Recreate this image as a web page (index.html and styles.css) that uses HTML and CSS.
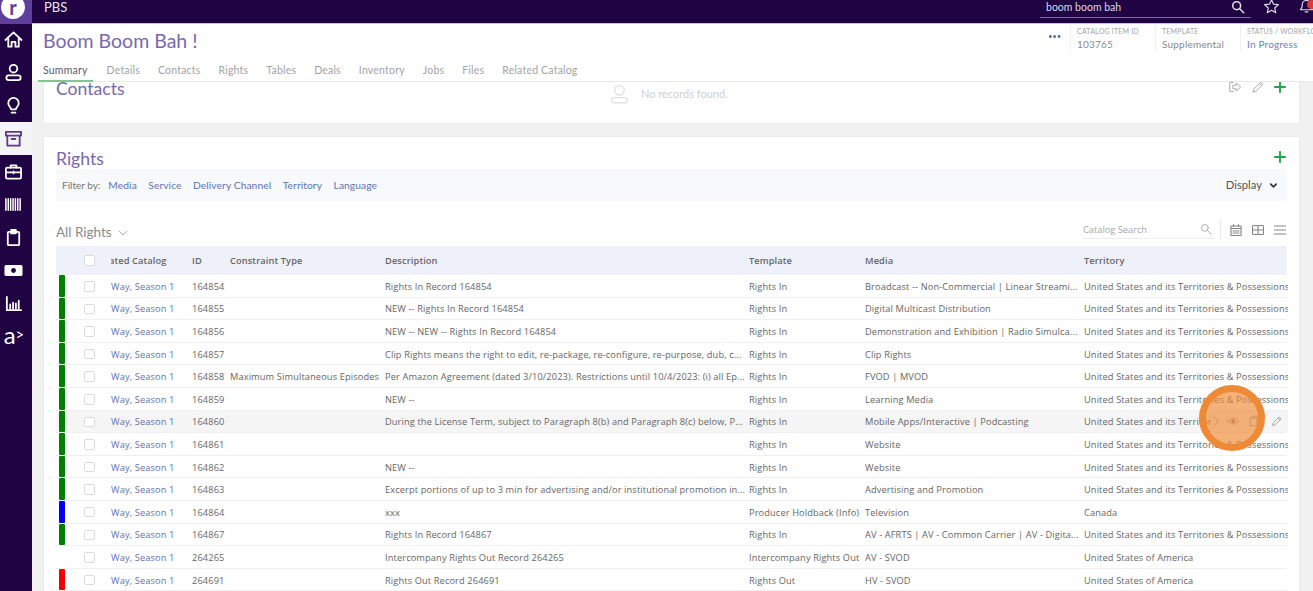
FILE: index.html
```html
<!DOCTYPE html>
<html lang="en">
<head>
<meta charset="utf-8">
<title>Boom Boom Bah !</title>
<link rel="stylesheet" href="styles.css">
</head>
<body>
<div class="app">
  <nav class="sidebar">
    <div class="logo"><span class="logo-disc">r</span></div>
    <a class="nav-item"><svg viewBox="0 0 20 20"><path d="M1.500 10.500 10 2.500l8.500 8M4.500 8.500V17.500h3.500v-5h4v5h3.500V8.500"/></svg></a>
    <a class="nav-item"><svg viewBox="0 0 20 20"><circle cx="10" cy="6" r="4"/><rect x="2.500" y="13" width="15" height="5" rx="2.500"/></svg></a>
    <a class="nav-item"><svg viewBox="0 0 20 20"><path d="M7.500 14C7 11.500 4.500 10.500 4.500 7.500a5.500 5.500 0 0 1 11 0c0 3-2.500 4-3 6.500zM8 17.500h4"/></svg></a>
    <a class="nav-item active"><svg viewBox="0 0 20 20"><rect x="2" y="3" width="16" height="4"/><path d="M3.500 7v10.500h13V7M8 10.500h4"/></svg></a>
    <a class="nav-item"><svg viewBox="0 0 20 20"><rect x="2" y="6" width="16" height="11.500" rx="1.500"/><path d="M7 6V3.500h6V6M2 11h16M10 10v2"/></svg></a>
    <a class="nav-item"><svg viewBox="0 0 20 20" class="bars"><path d="M2 4v12M4.500 4v12M7 4v12M9.500 4v12M12 4v12M14.500 4v12M17 4v12"/></svg></a>
    <a class="nav-item"><svg viewBox="0 0 20 20"><rect x="4" y="4" width="12" height="14" rx="1"/><rect x="7.500" y="2" width="5" height="3.500" fill="#fff"/></svg></a>
    <a class="nav-item"><svg viewBox="0 0 22 20"><rect x="1.500" y="4.500" width="19" height="11" rx="1" fill="#fff"/><circle cx="11" cy="10" r="2.800" fill="#1f0342" stroke="none"/></svg></a>
    <a class="nav-item"><svg viewBox="0 0 20 20"><path d="M3 3v14h15M6.500 15v-4M9.500 15V9M12.500 15v-5M15.500 15V7"/></svg></a>
    <a class="nav-item nav-text">a<span class="nav-caret">&gt;</span></a>
  </nav>
  <div class="main">
    <header class="topbar">
      <span class="org">PBS</span>
      <div class="top-tools">
        <div class="search">
          <span>boom boom bah</span>
          <svg viewBox="0 0 16 16"><circle cx="6.500" cy="6.500" r="4.500"/><path d="M10 10l4.500 4.500"/></svg>
        </div>
        <svg class="tool-star" viewBox="0 0 20 20"><path d="M10 2l2.400 5.300 5.600.6-4.200 3.800 1.200 5.700L10 14.500l-5 2.900 1.200-5.700L2 7.900l5.600-.6z"/></svg>
        <div class="bell">
          <svg viewBox="0 0 20 20"><path d="M3 15c2-2 2-3.500 2-6a5 5 0 0 1 10 0c0 2.500 0 4 2 6zM8.500 17.500h3"/></svg>
          <span class="badge"></span>
        </div>
      </div>
    </header>
    <section class="pagehead">
      <div class="title-row">
        <h1>Boom Boom Bah !</h1>
        <div class="meta">
          <span class="dots">•••</span>
          <div class="meta-col"><small>CATALOG ITEM ID</small><span>103765</span></div>
          <div class="meta-col"><small>TEMPLATE</small><span>Supplemental</span></div>
          <div class="meta-col"><small>STATUS / WORKFLOW</small><span class="link">In Progress</span></div>
        </div>
      </div>
      <div class="tabs">
        <a class="tab current">Summary</a><a class="tab">Details</a><a class="tab">Contacts</a><a class="tab">Rights</a><a class="tab">Tables</a><a class="tab">Deals</a><a class="tab">Inventory</a><a class="tab">Jobs</a><a class="tab">Files</a><a class="tab">Related Catalog</a>
      </div>
    </section>
    <div class="content">
      <section class="card contacts">
        <h2>Contacts</h2>
        <div class="empty">
          <svg viewBox="0 0 20 20"><circle cx="10" cy="6.500" r="4.500"/><rect x="2.500" y="13.500" width="15" height="5" rx="2.500"/></svg>
          <span>No records found.</span>
        </div>
        <div class="card-tools">
          <svg class="grey" viewBox="0 0 16 16"><path d="M6 3H2v10h4M6 6h3.500V3.500L14.500 8l-5 4.500V10H6z"/></svg>
          <svg class="grey" viewBox="0 0 16 16"><path d="M2.500 13.500l1-3.500 7.500-7.500 2.500 2.500L6 12.500zM9.500 4l2.500 2.500"/></svg>
          <svg class="plus" viewBox="0 0 14 14"><path d="M7 1v12M1 7h12"/></svg>
        </div>
      </section>
      <section class="card rights">
        <div class="rights-head">
          <h2>Rights</h2>
          <svg class="plus" viewBox="0 0 14 14"><path d="M7 1v12M1 7h12"/></svg>
        </div>
        <div class="filters">
          <span class="filter-label">Filter by:</span>
          <a>Media</a><a>Service</a><a>Delivery Channel</a><a>Territory</a><a>Language</a>
          <span class="display">Display<svg viewBox="0 0 10 10"><path d="M2 3.500 5 6.500l3-3"/></svg></span>
        </div>
        <div class="view-row">
          <span class="view-name">All Rights<svg viewBox="0 0 12 12"><path d="M1.500 4 6 8.500 10.500 4"/></svg></span>
          <div class="view-tools">
            <div class="cat-search"><span>Catalog Search</span><svg viewBox="0 0 16 16"><circle cx="6.500" cy="6.500" r="4.500"/><path d="M10 10l4.500 4.500"/></svg></div>
            <span class="tool-sep"></span>
            <svg viewBox="0 0 14 14"><rect x="2" y="3" width="10" height="9.500"/><path d="M2 5.500h10M4.500 1.500v2M9.500 1.500v2M4 8h6M4 10h6"/></svg>
            <svg viewBox="0 0 14 14"><rect x="1.500" y="2.500" width="11" height="9" rx="1"/><path d="M1.500 7h11M7 2.500v9"/></svg>
            <svg viewBox="0 0 14 14"><path d="M1.500 3h11M1.500 7h11M1.500 11h11"/></svg>
          </div>
        </div>
        <div class="grid">
          <div class="row head">
            <span class="c-mark"></span><span class="c-check"><i class="box"></i></span>
            <span class="c-cat clip">ated Catalog</span><span class="c-id">ID</span><span class="c-con">Constraint Type</span><span class="c-desc">Description</span><span class="c-tpl">Template</span><span class="c-med">Media</span><span class="c-ter">Territory</span>
          </div>
          <div class="row"><span class="c-mark"><i class="mark green"></i></span><span class="c-check"><i class="box"></i></span><a class="c-cat">Way, Season 1</a><span class="c-id">164854</span><span class="c-con"></span><span class="c-desc">Rights In Record 164854</span><span class="c-tpl">Rights In</span><span class="c-med">Broadcast -- Non-Commercial | Linear Streami...</span><span class="c-ter">United States and its Territories &amp; Possessions</span></div>
          <div class="row"><span class="c-mark"><i class="mark green"></i></span><span class="c-check"><i class="box"></i></span><a class="c-cat">Way, Season 1</a><span class="c-id">164855</span><span class="c-con"></span><span class="c-desc">NEW -- Rights In Record 164854</span><span class="c-tpl">Rights In</span><span class="c-med">Digital Multicast Distribution</span><span class="c-ter">United States and its Territories &amp; Possessions</span></div>
          <div class="row"><span class="c-mark"><i class="mark green"></i></span><span class="c-check"><i class="box"></i></span><a class="c-cat">Way, Season 1</a><span class="c-id">164856</span><span class="c-con"></span><span class="c-desc">NEW -- NEW -- Rights In Record 164854</span><span class="c-tpl">Rights In</span><span class="c-med">Demonstration and Exhibition | Radio Simulca...</span><span class="c-ter">United States and its Territories &amp; Possessions</span></div>
          <div class="row"><span class="c-mark"><i class="mark green"></i></span><span class="c-check"><i class="box"></i></span><a class="c-cat">Way, Season 1</a><span class="c-id">164857</span><span class="c-con"></span><span class="c-desc">Clip Rights means the right to edit, re-package, re-configure, re-purpose, dub, c...</span><span class="c-tpl">Rights In</span><span class="c-med">Clip Rights</span><span class="c-ter">United States and its Territories &amp; Possessions</span></div>
          <div class="row"><span class="c-mark"><i class="mark green"></i></span><span class="c-check"><i class="box"></i></span><a class="c-cat">Way, Season 1</a><span class="c-id">164858</span><span class="c-con">Maximum Simultaneous Episodes</span><span class="c-desc">Per Amazon Agreement (dated 3/10/2023). Restrictions until 10/4/2023: (i) all Ep...</span><span class="c-tpl">Rights In</span><span class="c-med">FVOD | MVOD</span><span class="c-ter">United States and its Territories &amp; Possessions</span></div>
          <div class="row"><span class="c-mark"><i class="mark green"></i></span><span class="c-check"><i class="box"></i></span><a class="c-cat">Way, Season 1</a><span class="c-id">164859</span><span class="c-con"></span><span class="c-desc">NEW --</span><span class="c-tpl">Rights In</span><span class="c-med">Learning Media</span><span class="c-ter">United States and its Territories &amp; Possessions</span></div>
          <div class="row hover"><span class="c-mark"><i class="mark green"></i></span><span class="c-check"><i class="box"></i></span><a class="c-cat">Way, Season 1</a><span class="c-id">164860</span><span class="c-con"></span><span class="c-desc">During the License Term, subject to Paragraph 8(b) and Paragraph 8(c) below, P...</span><span class="c-tpl">Rights In</span><span class="c-med">Mobile Apps/Interactive | Podcasting</span><span class="c-ter">United States and its Territories &amp; Possessions</span>
            <div class="row-actions">
              <svg viewBox="0 0 14 14"><path d="M5 2l5 5-5 5"/></svg>
              <svg viewBox="0 0 14 14"><path d="M1 7c3-4.500 9-4.500 12 0-3 4.500-9 4.500-12 0z"/><circle cx="7" cy="7" r="1.800" fill="#a55"/></svg>
              <svg viewBox="0 0 14 14"><rect x="3" y="3.500" width="7.500" height="9"/><path d="M5.500 3.500V1.500h6v9h-1"/></svg>
              <svg viewBox="0 0 14 14"><path d="M2 12l.8-3 6.700-6.700 2.200 2.200L5 11.200zM8.500 3.500l2.200 2.200"/></svg>
            </div>
          </div>
          <div class="row"><span class="c-mark"><i class="mark green"></i></span><span class="c-check"><i class="box"></i></span><a class="c-cat">Way, Season 1</a><span class="c-id">164861</span><span class="c-con"></span><span class="c-desc"></span><span class="c-tpl">Rights In</span><span class="c-med">Website</span><span class="c-ter">United States and its Territories &amp; Possessions</span></div>
          <div class="row"><span class="c-mark"><i class="mark green"></i></span><span class="c-check"><i class="box"></i></span><a class="c-cat">Way, Season 1</a><span class="c-id">164862</span><span class="c-con"></span><span class="c-desc">NEW --</span><span class="c-tpl">Rights In</span><span class="c-med">Website</span><span class="c-ter">United States and its Territories &amp; Possessions</span></div>
          <div class="row"><span class="c-mark"><i class="mark green"></i></span><span class="c-check"><i class="box"></i></span><a class="c-cat">Way, Season 1</a><span class="c-id">164863</span><span class="c-con"></span><span class="c-desc">Excerpt portions of up to 3 min for advertising and/or institutional promotion in...</span><span class="c-tpl">Rights In</span><span class="c-med">Advertising and Promotion</span><span class="c-ter">United States and its Territories &amp; Possessions</span></div>
          <div class="row"><span class="c-mark"><i class="mark blue"></i></span><span class="c-check"><i class="box"></i></span><a class="c-cat">Way, Season 1</a><span class="c-id">164864</span><span class="c-con"></span><span class="c-desc">xxx</span><span class="c-tpl">Producer Holdback (Info)</span><span class="c-med">Television</span><span class="c-ter">Canada</span></div>
          <div class="row"><span class="c-mark"><i class="mark green"></i></span><span class="c-check"><i class="box"></i></span><a class="c-cat">Way, Season 1</a><span class="c-id">164867</span><span class="c-con"></span><span class="c-desc">Rights In Record 164867</span><span class="c-tpl">Rights In</span><span class="c-med">AV - AFRTS | AV - Common Carrier | AV - Digita...</span><span class="c-ter">United States and its Territories &amp; Possessions</span></div>
          <div class="row"><span class="c-mark"></span><span class="c-check"><i class="box"></i></span><a class="c-cat">Way, Season 1</a><span class="c-id">264265</span><span class="c-con"></span><span class="c-desc">Intercompany Rights Out Record 264265</span><span class="c-tpl">Intercompany Rights Out</span><span class="c-med">AV - SVOD</span><span class="c-ter">United States of America</span></div>
          <div class="row"><span class="c-mark"><i class="mark red"></i></span><span class="c-check"><i class="box"></i></span><a class="c-cat">Way, Season 1</a><span class="c-id">264691</span><span class="c-con"></span><span class="c-desc">Rights Out Record 264691</span><span class="c-tpl">Rights Out</span><span class="c-med">HV - SVOD</span><span class="c-ter">United States of America</span></div>
        </div>
      </section>
    </div>
  </div>
</div>
<div class="spotlight"></div>
</body>
</html>
```
FILE: styles.css
```css
* { box-sizing: border-box; }
html, body { margin: 0; height: 591px; overflow: hidden; }
body { font-family: "Open Sans", "Liberation Sans", sans-serif; font-size: 9.5px; color: #666; background: #f1f1f1; }
h1, h2 { margin: 0; font-family: Lato, "Open Sans", sans-serif; font-weight: 400; color: #7868b0; }
svg { fill: none; stroke-linecap: round; stroke-linejoin: round; }

.app { display: flex; height: 591px; }

/* sidebar */
.sidebar { width: 32px; flex: none; background: #1f0342; display: flex; flex-direction: column; }
.logo { height: 24px; background: #5f3f9e; overflow: hidden; display: flex; justify-content: center; margin-bottom: -1px; padding-right: 6px; }
.logo-disc { width: 24px; height: 24px; flex: none; margin-top: -5px; border-radius: 50%; background: #fff; color: #5f3f9e; font: 700 20px/24px Lato, sans-serif; text-align: center; }
.nav-item { height: 33px; flex: none; display: flex; align-items: center; justify-content: center; padding-right: 6px; }
.nav-item svg { width: 19px; height: 19px; stroke: #fff; stroke-width: 1.900; }
.nav-item .bars { stroke-width: 1.600; }
.nav-item.active { background: #f4f4f4; }
.nav-item.active svg { stroke: #5b3b8c; }
.nav-text { color: #fff; font: 400 24px/1 Lato, sans-serif; padding-bottom: 4px; padding-right: 4px; }
.nav-caret { font-size: 15px; }

.main { flex: 1; min-width: 0; display: flex; flex-direction: column; }

/* top bar */
.topbar { height: 24px; flex: none; background: #1f0342; border-bottom: 1px solid #c9bfd8; display: flex; align-items: flex-start; justify-content: space-between; padding-left: 12px; overflow: hidden; }
.org { color: #e8e4f0; font: 400 13px/14px Lato, sans-serif; }
.top-tools { display: flex; align-items: flex-start; gap: 12px; margin-right: -15px; }
.search { width: 211px; height: 18px; border-bottom: 1px solid #7f6a9e; display: flex; justify-content: space-between; padding: 0 6px; color: #ddd8e6; font: 400 10.500px/14px Lato, sans-serif; }
.search svg { width: 14px; height: 14px; stroke: #ddd8e6; stroke-width: 1.800; }
.tool-star { width: 17px; height: 17px; margin-top: -2px; stroke: #ddd8e6; stroke-width: 1.400; }
.bell { position: relative; width: 30px; margin-left: 6px; height: 16px; }
.bell svg { width: 17px; height: 17px; stroke: #ddd8e6; stroke-width: 1.400; margin-top: -3px; }
.badge { position: absolute; left: 9px; top: 0; width: 9px; height: 9px; border-radius: 50%; background: #e53935; }

/* page header */
.pagehead { height: 58px; flex: none; background: #fff; border-bottom: 1px solid #e9e9e9; padding-left: 11px; position: relative; z-index: 2; }
.title-row { height: 36px; display: flex; justify-content: space-between; }
h1 { font-size: 19.500px; line-height: 33px; }
.meta { display: flex; align-items: flex-start; padding-top: 1px; }
.dots { color: #4a5fb0; font-size: 12px; line-height: 24px; letter-spacing: -.2px; margin-right: 9px; }
.meta-col { width: 85px; height: 27px; border-left: 1px solid #f0f0f0; padding-left: 6px; display: flex; flex-direction: column; font: 400 10px/14px Lato, sans-serif; letter-spacing: .2px; color: #8a8a8a; white-space: nowrap; overflow: hidden; }
.meta-col small { font-size: 7px; line-height: 11px; padding-top: 1px; color: #a5a5a5; }
.meta-col .link { color: #6d7fc0; }
.meta-col:last-child { width: 73px; }
.tabs { display: flex; margin-left: -5px; }
.tab { padding: 0 5px; margin-right: 8px; height: 22px; font: 400 10.500px/20px Lato, sans-serif; letter-spacing: .2px; color: #a3a3a3; }
.tab.current { color: #5e5a6b; border-bottom: 2px solid #7ec88f; margin-right: 9px; }

/* content */
.content { flex: 1; min-height: 0; padding: 0 13px 0 11px; overflow: hidden; }
.card { background: #fff; border: 1px solid #ececec; border-top: 0; }
h2 { font-size: 17.600px; line-height: 20px; }
.contacts { height: 42px; padding: 0 12px; display: flex; align-items: flex-start; position: relative; }
.contacts h2 { margin-top: -3px; width: 553px; flex: none; }
.empty { display: flex; align-items: center; gap: 11px; font: 400 11px/14px Lato, sans-serif; color: #cfcfcf; margin-top: 1px; }
.empty svg { width: 21px; height: 22px; stroke: #e0e0e0; stroke-width: 1.300; }
.card-tools { margin-left: auto; display: flex; align-items: center; gap: 9px; margin-top: -2px; margin-right: 1px; }
.card-tools .grey { width: 14px; height: 14px; stroke: #a8a8a8; stroke-width: 1.100; }
.plus { width: 12px; height: 12px; stroke: #1fa84a; stroke-width: 2.200; }

.rights { margin-top: 12px; border-top: 1px solid #ececec; height: 500px; padding: 0 12px; }
.rights-head { height: 32px; display: flex; justify-content: space-between; align-items: center; padding: 11px 1px 0 0; }
.rights-head .plus { margin-top: -3px; }
.filters { height: 32px; background: #f7f9fb; display: flex; align-items: center; padding: 0 9px 0 6px; font: 400 10px/14px Lato, sans-serif; }
.filters a { color: #6074b8; margin-right: 11.500px; font-size: 10.250px; letter-spacing: .08px; }
.filter-label { color: #777; margin-right: 8px; }
.display { margin-left: auto; color: #555; font-size: 11.250px; display: flex; align-items: center; gap: 7px; }
.display svg { width: 9px; height: 9px; stroke: #333; stroke-width: 1.800; }
.view-row { height: 45px; display: flex; justify-content: space-between; align-items: center; padding-top: 16px; }
.view-name { font: 400 13.500px/16px Lato, sans-serif; color: #8a8a8a; display: flex; align-items: center; gap: 6px; }
.view-name svg { width: 10px; height: 10px; stroke: #999; stroke-width: 1; margin-top: 2px; }
.view-tools { display: flex; align-items: center; gap: 8px; margin-top: -4px; }
.view-tools > svg { width: 14px; height: 14px; stroke: #868686; stroke-width: 1.100; }
.cat-search { width: 132px; height: 19px; border-bottom: 1px solid #eee; display: flex; justify-content: space-between; align-items: center; font-size: 9.250px; color: #a8a8a8; padding-right: 3px; }
.cat-search svg { width: 12px; height: 12px; stroke: #a0a0a0; stroke-width: 1.100; }
.tool-sep { width: 1px; height: 18px; background: #e8e8e8; margin-left: -3px; }

/* table */
.row { height: 22.600px; display: flex; align-items: center; padding-top: 1px; border-bottom: 1px solid #eff0f1; white-space: nowrap; position: relative; font-size: 9.250px; letter-spacing: .12px; }
.row.head { height: 29px; padding-top: 0; background: #eef0fa; border-bottom: 0; font-weight: 600; color: #666; }
.row.hover { background: #f5f5f5; }
.row > span, .row > a { flex: none; overflow: hidden; }
.c-mark { width: 28px; height: calc(100% + 1px); margin-top: -1px; display: flex; padding: 0 0 0 3px; }
.mark { width: 6px; height: 100%; display: block; border-radius: 1px; }
.mark.green { background: #008000; }
.mark.blue { background: #0000f5; }
.mark.red { background: #f50000; }
.c-check { width: 27px; display: flex; }
.box { width: 10.500px; height: 10.500px; border: 1px solid #dcdcdc; border-radius: 2px; background: #fff; display: block; }
.c-cat { width: 81px; color: #6072b6; }
.clip { color: #666; text-indent: -2px; }
.c-id { width: 38px; }
.c-con { width: 155px; }
.c-desc { width: 364px; }
.c-tpl { width: 116px; }
.c-med { width: 219px; }
.c-ter { width: 204px; }
.row-actions { position: absolute; left: 1155px; top: 0; width: 77px; height: 100%; background: #f5f5f5; display: flex; align-items: center; gap: 9px; }
.row-actions svg { width: 12px; height: 12px; stroke: #9a9a9a; stroke-width: 1; }
.row-actions svg:first-child { margin: 0 -4px 0 -1px; }
.row-actions svg:last-child { margin-left: 2px; }

/* tutorial highlight */
.spotlight { position: absolute; left: 1199px; top: 385px; width: 66px; height: 66px; border-radius: 50%; border: 7px solid #ee8a35; background: rgba(238, 138, 53, .66); }
```
